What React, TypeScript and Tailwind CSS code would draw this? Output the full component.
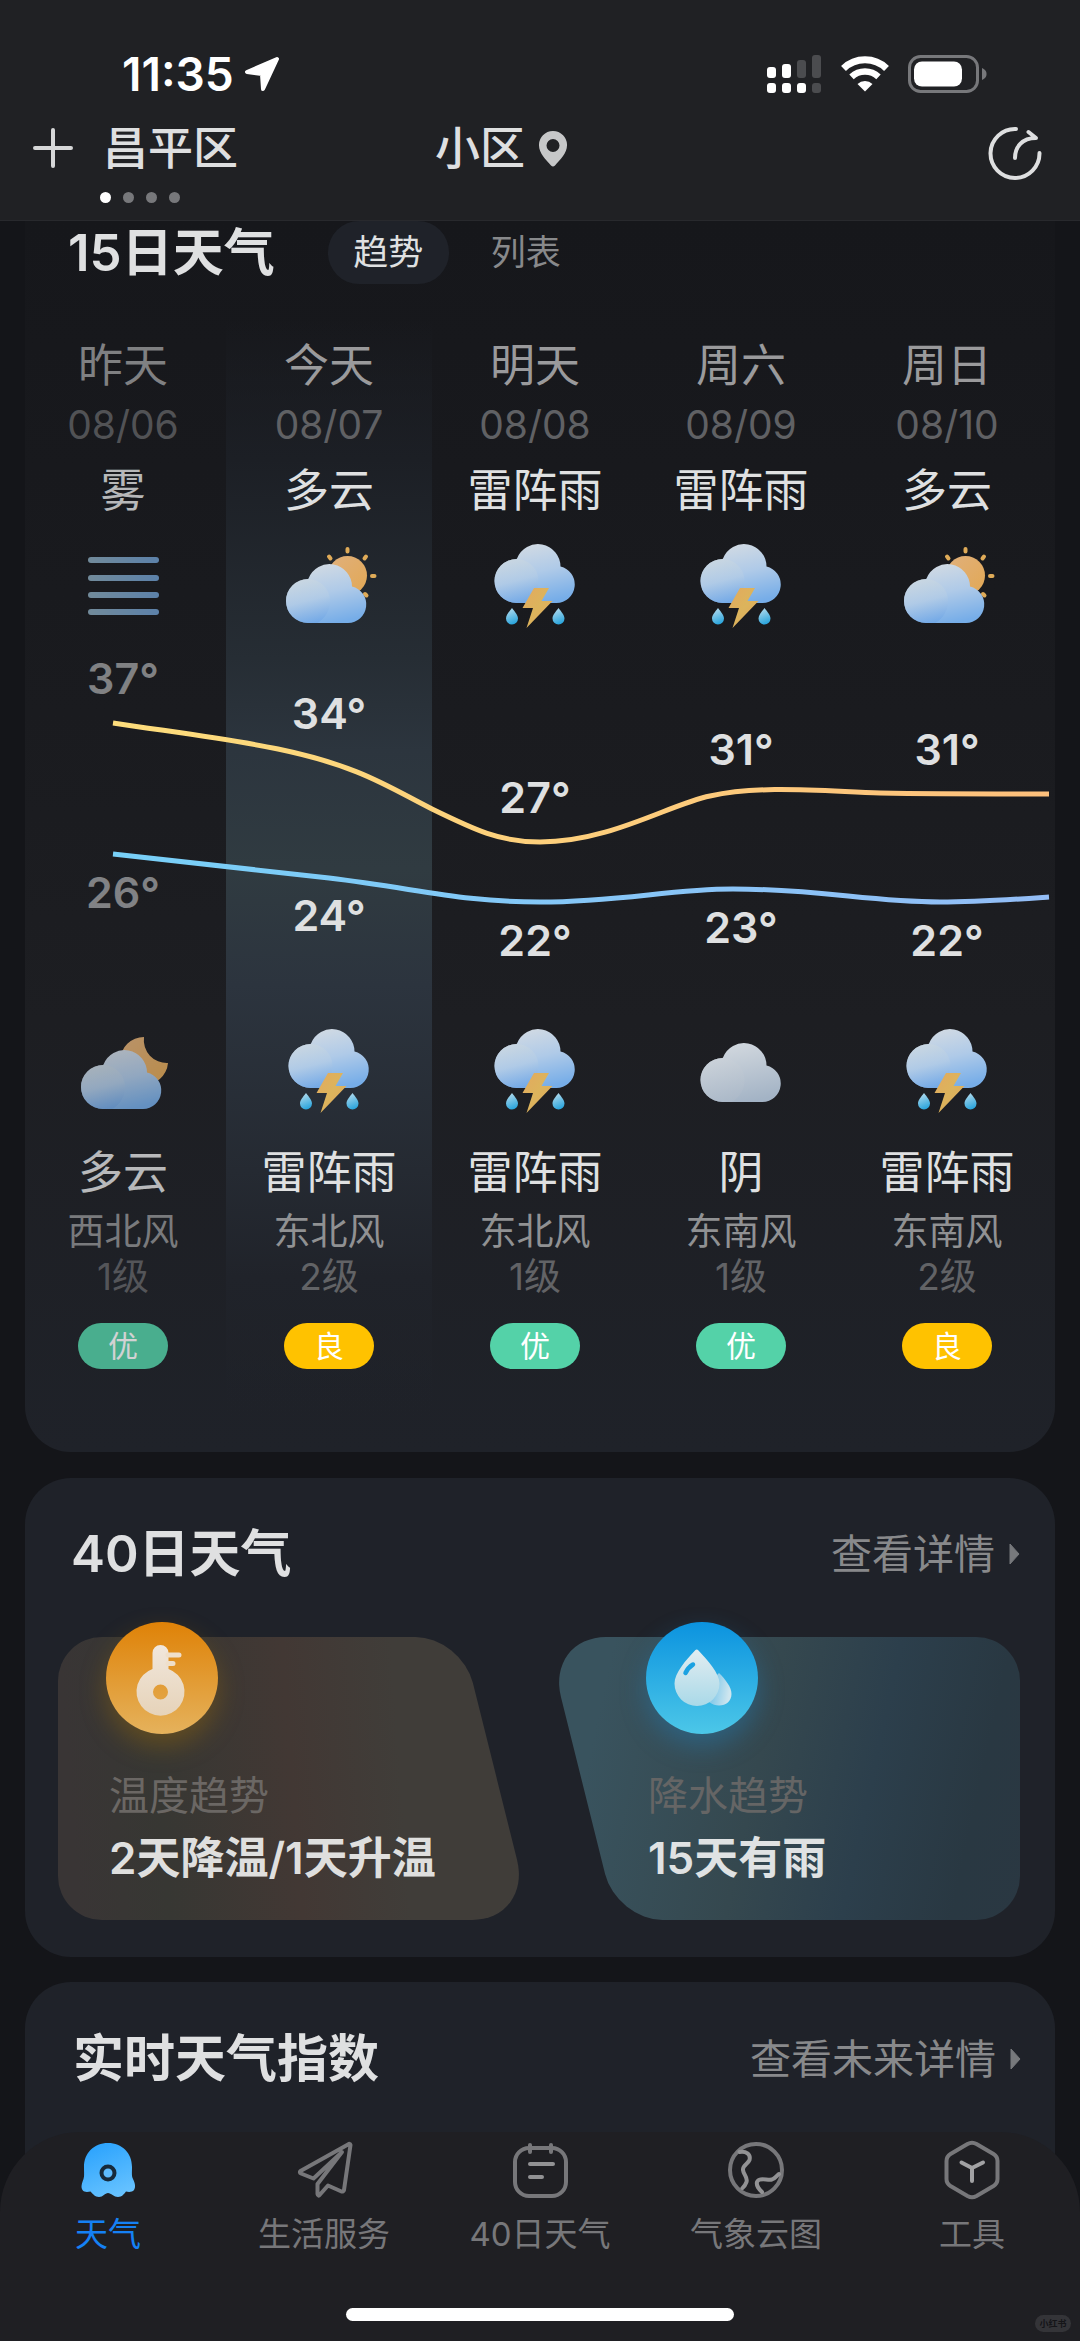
import React from "react";

type Icon = "fog" | "cloudSun" | "cloudMoon" | "thunder" | "overcast";

interface Day {
  name: string;
  date: string;
  day: string;
  dayIcon: Icon;
  high: number;
  highTop: number;
  low: number;
  lowTop: number;
  night: string;
  nightIcon: Icon;
  wind: string;
  level: string;
  air: "优" | "良";
}

const days: Day[] = [
  { name: "昨天", date: "08/06", day: "雾", dayIcon: "fog", high: 37, highTop: 20, low: 26, lowTop: 234, night: "多云", nightIcon: "cloudMoon", wind: "西北风", level: "1级", air: "优" },
  { name: "今天", date: "08/07", day: "多云", dayIcon: "cloudSun", high: 34, highTop: 55, low: 24, lowTop: 257, night: "雷阵雨", nightIcon: "thunder", wind: "东北风", level: "2级", air: "良" },
  { name: "明天", date: "08/08", day: "雷阵雨", dayIcon: "thunder", high: 27, highTop: 139, low: 22, lowTop: 282, night: "雷阵雨", nightIcon: "thunder", wind: "东北风", level: "1级", air: "优" },
  { name: "周六", date: "08/09", day: "雷阵雨", dayIcon: "thunder", high: 31, highTop: 91, low: 23, lowTop: 269, night: "阴", nightIcon: "overcast", wind: "东南风", level: "1级", air: "优" },
  { name: "周日", date: "08/10", day: "多云", dayIcon: "cloudSun", high: 31, highTop: 91, low: 22, lowTop: 282, night: "雷阵雨", nightIcon: "thunder", wind: "东南风", level: "2级", air: "良" },
];

/* Gradients shared by every weather icon */
function Gradients() {
  return (
    <svg className="absolute h-0 w-0" aria-hidden="true">
      <defs>
        <linearGradient id="cloudBack" x1="0.3" y1="0" x2="0.6" y2="1">
          <stop offset="0" stopColor="#d3dbe3" />
          <stop offset="0.5" stopColor="#afcae8" />
          <stop offset="1" stopColor="#76ade8" />
        </linearGradient>
        <linearGradient id="cloudFront" x1="0.35" y1="0" x2="0.6" y2="1">
          <stop offset="0" stopColor="#ccd8e0" />
          <stop offset="0.5" stopColor="#b3cce6" />
          <stop offset="1" stopColor="#6fa6e6" />
        </linearGradient>
        <linearGradient id="greyBack" x1="0.3" y1="0" x2="0.6" y2="1">
          <stop offset="0" stopColor="#d3d9df" />
          <stop offset="1" stopColor="#a3b3c5" />
        </linearGradient>
        <linearGradient id="greyFront" x1="0.3" y1="0" x2="0.6" y2="1">
          <stop offset="0" stopColor="#ccd3da" />
          <stop offset="1" stopColor="#adbac9" />
        </linearGradient>
        <linearGradient id="sun" x1="0" y1="0" x2="1" y2="1">
          <stop offset="0" stopColor="#e0b07c" />
          <stop offset="1" stopColor="#e2a854" />
        </linearGradient>
        <linearGradient id="bolt" x1="0" y1="0" x2="1" y2="1">
          <stop offset="0" stopColor="#e3a95f" />
          <stop offset="0.5" stopColor="#dcb45c" />
          <stop offset="1" stopColor="#e2a65c" />
        </linearGradient>
        <linearGradient id="drop" x1="0.3" y1="0" x2="0.6" y2="1">
          <stop offset="0" stopColor="#b5dcee" />
          <stop offset="1" stopColor="#26a3dc" />
        </linearGradient>
        <linearGradient id="fog" gradientUnits="userSpaceOnUse" x1="10" y1="0" x2="80" y2="0">
          <stop offset="0" stopColor="#88a7ba" />
          <stop offset="1" stopColor="#6e9ccd" />
        </linearGradient>
      </defs>
    </svg>
  );
}

function Cloud({ x = 0, y = 0, grey = false }: { x?: number; y?: number; grey?: boolean }) {
  return (
    <g transform={`translate(${x} ${y})`}>
      <path
        d="M26.500 61A22 22 0 0 1 26.500 17L27 16.500A22.500 22.500 0 0 1 70.500 24.500A18.500 18.500 0 0 1 66.500 61Z"
        fill={grey ? "url(#greyBack)" : "url(#cloudBack)"}
      />
      <path
        d="M26.500 61A22 22 0 0 1 26.500 17A22 22 0 0 1 48.500 39C48.500 48 44 56 36 61Z"
        fill={grey ? "url(#greyFront)" : "url(#cloudFront)"}
        opacity="0.7"
      />
    </g>
  );
}

function WeatherIcon({ kind, label }: { kind: Icon; label: string }) {
  return (
    <svg viewBox="0 0 90 90" className="size-[90px] overflow-visible" role="img" aria-label={label}>
      {kind === "fog" && (
        <g fill="url(#fog)">
          <rect x="10" y="15" width="71" height="6" rx="3" />
          <rect x="10" y="33" width="71" height="6" rx="3" />
          <rect x="10" y="50" width="71" height="6" rx="3" />
          <rect x="10" y="67" width="71" height="6" rx="3" />
        </g>
      )}
      {kind === "cloudSun" && (
        <>
          <circle cx="63.500" cy="33.500" r="19.500" fill="url(#sun)" />
          <g stroke="#dfab58" strokeWidth="4" strokeLinecap="round">
            <path d="M63.500 7v2.500M88 34h2.500M80.500 16.500l1.500-2M46.500 16.500l-1.500-2M81 52l1.500 1.500" />
          </g>
          <Cloud x={-2.5} y={20} />
        </>
      )}
      {kind === "cloudMoon" && (
        <>
          <path d="M66 10A24 24 0 1 0 90 36A23 23 0 0 1 66 10Z" fill="url(#sun)" />
          <Cloud x={-1.5} y={21} />
        </>
      )}
      {kind === "overcast" && <Cloud y={14} grey />}
      {kind === "thunder" && (
        <>
          <Cloud />
          <path d="M44 46H59L51.500 59H62.500L36.500 86L43 66H32.500Z" fill="url(#bolt)" />
          <path d="M22 66C25 70 28 73 28 76.500A6 6 0 0 1 16 76.500C16 73 19 70 22 66Z" fill="url(#drop)" />
          <path d="M68.500 66C71.500 70 74.500 73 74.500 76.500A6 6 0 0 1 62.500 76.500C62.500 73 65.500 70 68.500 66Z" fill="url(#drop)" />
        </>
      )}
    </svg>
  );
}

function StatusBar() {
  return (
    <div className="flex h-[100px] items-center justify-between pt-[47px] pr-[93px] pl-[122px]">
      <div className="flex items-center gap-[10px] text-[46px] leading-[52px] font-semibold text-white">
        11:35
        <svg viewBox="0 0 36 36" className="size-9" aria-hidden="true">
          <path d="M33 3L3 16L18 18L19 33Z" fill="#fff" stroke="#fff" strokeWidth="4" strokeLinejoin="round" />
        </svg>
      </div>
      <div className="flex items-center gap-[19px]">
        <svg viewBox="0 0 55 38" className="h-[38px] w-[55px]" aria-label="信号">
          <g fill="#fff">
            <rect x="0" y="12" width="9" height="11" rx="3" />
            <rect x="15" y="9" width="9" height="14" rx="3" />
            <rect x="0" y="28" width="9" height="10" rx="3" />
            <rect x="15" y="28" width="9" height="10" rx="3" />
            <rect x="30" y="28" width="9" height="10" rx="3" />
          </g>
          <g fill="#4b4c4f">
            <rect x="30" y="5" width="9" height="18" rx="3" />
            <rect x="45" y="0" width="9" height="23" rx="3" />
            <rect x="45" y="28" width="9" height="10" rx="3" />
          </g>
        </svg>
        <svg viewBox="0 0 48 36" className="h-9 w-12" aria-label="无线网络">
          <g fill="none" stroke="#fff">
            <path d="M2.500 12.500A31 31 0 0 1 45.500 12.500" strokeWidth="7" />
            <path d="M10.500 20.800A20 20 0 0 1 37.500 20.800" strokeWidth="6.500" />
          </g>
          <path d="M16.500 28A11 11 0 0 1 31.500 28L24 35.500Z" fill="#fff" />
        </svg>
        <svg viewBox="0 0 79 38" className="h-[38px] w-[79px]" aria-label="电量">
          <rect x="1.500" y="1.500" width="68" height="35" rx="11" fill="none" stroke="#77787b" strokeWidth="3" />
          <rect x="6" y="6.500" width="48" height="25" rx="8" fill="#fff" />
          <path d="M74 13C78 15 78.500 17 78.500 19S78 23 74 25Z" fill="#77787b" />
        </svg>
      </div>
    </div>
  );
}

function Header() {
  return (
    <header className="relative z-10 shrink-0 border-b border-[#28292d] bg-[#202124] text-[#dedfe0]">
      <StatusBar />
      <div className="grid h-[120px] grid-cols-[2fr_2fr_1fr] items-start pt-[23px]">
        <div className="flex gap-[27px] pl-[33px]">
          <button type="button" aria-label="添加城市" className="flex h-[50px] items-center">
            <svg viewBox="0 0 40 40" className="size-10" aria-hidden="true">
              <path d="M20 2V38M2 20H38" stroke="#d6d7d8" strokeWidth="4" strokeLinecap="round" />
            </svg>
          </button>
          <div className="flex flex-col gap-[17px]">
            <h1 className="pl-[3px] text-[45px] leading-[52px] font-medium">昌平区</h1>
            <div className="flex gap-[12px]">
              <span className="size-[11px] rounded-full bg-white" />
              <span className="size-[11px] rounded-full bg-[#77787b]" />
              <span className="size-[11px] rounded-full bg-[#77787b]" />
              <span className="size-[11px] rounded-full bg-[#77787b]" />
            </div>
          </div>
        </div>
        <div className="flex items-center gap-[14px] pl-[3px] text-[45px] leading-[52px] font-medium">
          小区
          <svg viewBox="0 0 28 36" className="h-9 w-7" aria-hidden="true">
            <path
              fillRule="evenodd"
              d="M14 0A14 14 0 0 0 0 14.500C0 22 7 29 12 34.500Q14 36.500 16 34.500C21 29 28 22 28 14.500A14 14 0 0 0 14 0ZM14 8A6.500 6.500 0 1 1 14 21A6.500 6.500 0 1 1 14 8Z"
              fill="#c6c7c8"
            />
          </svg>
        </div>
        <button type="button" aria-label="刷新" className="mr-[38px] justify-self-end pt-[3px]">
          <svg viewBox="0 0 54 54" className="size-[54px]" fill="none" stroke="#dedfe0" strokeWidth="4" strokeLinecap="round" strokeLinejoin="round" aria-hidden="true">
            <path d="M28 3A24.500 24.500 0 1 0 51.500 27" />
            <path d="M27 32C27 21 34 12 48 12L40.500 6" />
          </svg>
        </button>
      </div>
    </header>
  );
}

function TrendChart() {
  return (
    <svg
      viewBox="0 0 1030 395"
      preserveAspectRatio="none"
      className="pointer-events-none absolute top-[348px] left-0 h-[395px] w-full"
      fill="none"
      strokeWidth="5"
      aria-hidden="true"
    >
      <defs>
        <linearGradient id="highLine" gradientUnits="userSpaceOnUse" x1="93" y1="0" x2="1029" y2="0">
          <stop offset="0" stopColor="#fddd7c" />
          <stop offset="1" stopColor="#fdc07c" />
        </linearGradient>
        <linearGradient id="lowLine" gradientUnits="userSpaceOnUse" x1="93" y1="0" x2="1029" y2="0">
          <stop offset="0" stopColor="#78d0f8" />
          <stop offset="1" stopColor="#93bdf6" />
        </linearGradient>
      </defs>
      <path
        stroke="url(#highLine)"
        d="M93 91C160 101 210 107 258 117C340 134 370 156 412 177C455 198 480 210 520 210C590 210 650 172 690 164C740 153 800 159 860 161C920 162 980 162 1029 162"
      />
      <path
        stroke="url(#lowLine)"
        d="M93 222C170 231 240 238 309 246C400 257 440 270 520 270C600 270 650 257 713 257C800 257 850 270 920 270C960 270 1000 267 1029 265"
      />
    </svg>
  );
}

function DayColumn({ d, index }: { d: Day; index: number }) {
  const past = index === 0;
  const today = index === 1;
  return (
    <li
      className={
        "flex flex-col items-center pt-[56px] pb-[83px] text-center " +
        (today
          ? "bg-[linear-gradient(to_bottom,transparent_3%,#1c1f25_15%,#262d34_32%,#2c353e_40%,#303b41_50%,#2c343e_60%,#252a32_76%,#20232a_85%,transparent_97%)]"
          : "")
      }
    >
      <div className={"flex w-full flex-col items-center " + (past ? "opacity-80" : "")}>
        <p className="text-[45px] leading-[52px] text-[#9a9a9c]">{d.name}</p>
        <p className="text-[39px] leading-[66px] text-[#606164]">{d.date}</p>
        <p className="text-[45px] leading-[66px] text-[#dfe0e1]">{d.day}</p>
        <div className="pt-[18px]">
          <WeatherIcon kind={d.dayIcon} label={d.day} />
        </div>
        <div className={"relative h-[395px] w-full text-[43px] leading-[52px] font-semibold text-[#dfe0e1] " + (past ? "opacity-65" : "")}>
          <span className="absolute inset-x-0" style={{ top: d.highTop }}>{d.high}°</span>
          <span className="absolute inset-x-0" style={{ top: d.lowTop }}>{d.low}°</span>
        </div>
        <WeatherIcon kind={d.nightIcon} label={d.night} />
        <p className="pt-[30px] text-[45px] leading-[52px] text-[#dfe0e1]">{d.night}</p>
        <p className="pt-[10px] text-[37px] leading-[45px] text-[#909193]">{d.wind}</p>
        <p className="text-[37px] leading-[45px] text-[#626366]">{d.level}</p>
        <span
          className={
            "mt-[24px] h-[46px] w-[90px] rounded-full text-[30px] leading-[46px] text-white " +
            (d.air === "优" ? "bg-[#54d2a8]" : "bg-[#ffc200]")
          }
        >
          {d.air}
        </span>
      </div>
    </li>
  );
}

function MoreLink({ children }: { children: React.ReactNode }) {
  return (
    <a href="#" className="flex items-center gap-[14px] text-[41px] leading-[52px] text-[#88898b]">
      {children}
      <svg viewBox="0 0 11 22" className="h-[22px] w-[11px]" aria-hidden="true">
        <path d="M1 1L10 11L1 21Z" fill="#77797c" stroke="#77797c" strokeWidth="1" strokeLinejoin="round" />
      </svg>
    </a>
  );
}

function Forecast() {
  return (
    <section className="overflow-hidden rounded-b-[46px] bg-[linear-gradient(to_bottom,#16171b,#1a1b1f_40%,#1d1e22_65%,#1f2229)]">
      <div className="flex h-[63px] items-center pl-[43px]">
        <h2 className="text-[51px] leading-[60px] font-semibold text-[#dfe0e1]">15日天气</h2>
        <div className="ml-[53px] flex items-center text-[35px] leading-[63px]">
          <button type="button" className="w-[121px] rounded-[31px] bg-[#1f2229] text-[#dfe0e1]">趋势</button>
          <button type="button" className="ml-[42px] text-[#88898b]">列表</button>
        </div>
      </div>
      <div className="relative mr-[5px] -ml-[5px]">
        <ol className="grid grid-cols-5">
          {days.map((d, i) => (
            <DayColumn key={d.date} d={d} index={i} />
          ))}
        </ol>
        <TrendChart />
      </div>
    </section>
  );
}

function FortyDays() {
  return (
    <section className="mt-[26px] rounded-[46px] bg-[#1f2229] pt-[44px] pr-[35px] pb-[37px] pl-[33px]">
      <div className="flex h-[64px] items-center justify-between pl-[13px]">
        <h2 className="text-[51px] leading-[60px] font-semibold text-[#dfe0e1]">40日天气</h2>
        <MoreLink>查看详情</MoreLink>
      </div>
      <div className="mt-[51px] grid grid-cols-2 gap-[14px]">
        <a href="#" className="relative block pt-[133px] pb-[36px] pl-[51px]">
          <span className="absolute inset-0 overflow-hidden rounded-l-[44px]">
            <span className="absolute inset-y-0 right-0 -left-[80px] origin-bottom skew-x-[14deg] rounded-tr-[46px] rounded-br-[60px] bg-[linear-gradient(100deg,#393535_25%,#373733_40%,#423834_62%,#403d39_80%)]" />
          </span>
          <span className="absolute -top-[15px] left-[48px] size-[112px] rounded-full bg-[linear-gradient(to_bottom,#df8207,#e5b25c)] shadow-[0_12px_26px_rgba(150,105,10,0.45)]">
            <svg viewBox="0 0 112 112" className="size-full" aria-hidden="true">
              <defs>
                <linearGradient id="thermo" x1="0" y1="0" x2="0" y2="1">
                  <stop offset="0" stopColor="#f1e7dc" />
                  <stop offset="1" stopColor="#e6d3b9" />
                </linearGradient>
              </defs>
              <path
                fillRule="evenodd"
                fill="url(#thermo)"
                d="M46.500 31A8 8 0 0 1 62.500 31V47A24 24 0 1 1 46.500 47ZM54.500 62.500A7.500 7.500 0 1 0 54.500 77.500A7.500 7.500 0 1 0 54.500 62.500Z"
              />
              <path d="M62 33H73M62 41.500H67" stroke="#efdfca" strokeWidth="5" strokeLinecap="round" />
            </svg>
          </span>
          <span className="relative block text-[40px] leading-[52px] text-[#6b6764]">温度趋势</span>
          <span className="relative mt-[10px] block text-[44px] leading-[52px] font-semibold text-[#dfdfde]">2天降温/1天升温</span>
        </a>
        <a href="#" className="relative block pt-[133px] pb-[36px] pl-[102px]">
          <span className="absolute inset-0 overflow-hidden rounded-r-[44px]">
            <span className="absolute inset-y-0 -right-[80px] left-0 origin-top skew-x-[14deg] rounded-tl-[60px] rounded-bl-[46px] bg-[linear-gradient(115deg,#39535e_10%,#35484f_35%,#2c3f4c_52%,#293842_68%,#2b3742_90%)]" />
          </span>
          <span className="absolute -top-[15px] left-[100px] size-[112px] rounded-full bg-[linear-gradient(to_bottom,#0b93df,#4cc7e8)] shadow-[0_12px_26px_rgba(35,125,180,0.45)]">
            <svg viewBox="0 0 112 112" className="size-full" aria-hidden="true">
              <defs>
                <linearGradient id="water" x1="0" y1="0" x2="0" y2="1">
                  <stop offset="0" stopColor="#e3edf1" />
                  <stop offset="1" stopColor="#a9d9e8" />
                </linearGradient>
                <linearGradient id="waterSmall" x1="0" y1="0" x2="1" y2="0.2">
                  <stop offset="0.4" stopColor="#8accea" />
                  <stop offset="1" stopColor="#cfe6ef" />
                </linearGradient>
              </defs>
              <path d="M73 51C79 57 85.500 65 85.500 72C85.500 79 80 83.500 73 83.500C66 83.500 60 79 60 72C60 65 67 57 73 51Z" fill="url(#waterSmall)" />
              <path d="M49 28.500Q50.700 26.500 52.500 28.500C62 39 73.500 51 73.500 61.500A22.500 22.500 0 0 1 28.500 61.500C28.500 51 40 38 49 28.500Z" fill="url(#water)" />
              <path d="M39.500 51Q42 45.500 47 42.500" fill="none" stroke="#1ba2e2" strokeWidth="4.500" strokeLinecap="round" />
            </svg>
          </span>
          <span className="relative block text-[40px] leading-[52px] text-[#656565]">降水趋势</span>
          <span className="relative mt-[10px] block text-[44px] leading-[52px] font-semibold text-[#dfe2e3]">15天有雨</span>
        </a>
      </div>
    </section>
  );
}

function LiveIndex() {
  return (
    <section className="mt-[25px] flex-1 rounded-t-[46px] bg-[#1f2229] px-[34px] pt-[45px]">
      <div className="flex h-[64px] items-center justify-between pl-[14px]">
        <h2 className="text-[51px] leading-[60px] font-semibold text-[#dfe0e1]">实时天气指数</h2>
        <MoreLink>查看未来详情</MoreLink>
      </div>
    </section>
  );
}

const line = { fill: "none", stroke: "#77777a", strokeWidth: 4, strokeLinecap: "round", strokeLinejoin: "round" } as const;

const tabs = [
  {
    label: "天气",
    icon: (
      <>
        <defs>
          <linearGradient id="octopus" x1="0.3" y1="0" x2="0.7" y2="1">
            <stop offset="0" stopColor="#2ba3fd" />
            <stop offset="1" stopColor="#68c3ff" />
          </linearGradient>
        </defs>
        <path
          fill="url(#octopus)"
          d="M30 3C44 3 54 13 54 27C54 33 53.500 36 55 39C57 43 58 47 56 50C54 52.500 50 52 48 51.500C46 54 44 57 40 57C36 57 33 53 30 53C27 53 25 57 21 57C17 57 15 54 12.500 51.500C10 52 6 52.500 4.500 50C2.500 47 4 43 5.500 39C6.500 36 6 33 6 27C6 13 16 3 30 3Z"
        />
        <circle cx="30" cy="33" r="6.500" fill="#5ebcff" stroke="#172a3b" strokeWidth="4" />
      </>
    ),
  },
  {
    label: "生活服务",
    icon: (
      <g {...line}>
        <path d="M54 4.500L6.500 31Q5 32.500 7 33.500L19.500 38.500L48 12L23.500 44V54Q24 57 26 54.500L34 45.500L47.500 51.500Q49.500 52 50 50L56.500 5Q56 3 54 4.500Z" />
      </g>
    ),
  },
  {
    label: "40日天气",
    icon: (
      <g {...line}>
        <rect x="5" y="8" width="51" height="48" rx="14" />
        <path d="M20 5V12M41 5V12" />
        <path d="M20 24H43M20 37H32" stroke="#929294" />
      </g>
    ),
  },
  {
    label: "气象云图",
    icon: (
      <g {...line}>
        <circle cx="30" cy="30" r="26" />
        <path stroke="#929294" d="M13.500 12C20 11 25 14 23.500 20C22 24 16.500 25 17 30C17.500 35 22 37 20.500 42Q19 46 16.500 48M53 34C50 36 50 38 46 39.500C41 40.500 33 37 31 42C30 46 33 49 36 52" />
      </g>
    ),
  },
  {
    label: "工具",
    icon: (
      <g {...line}>
        <path d="M25.500 4Q30 1.500 34.500 4L51.500 14Q55.500 16.500 55.500 21V39Q55.500 43.500 51.500 46L34.500 56Q30 58.500 25.500 56L8.500 46Q4.500 43.500 4.500 39V21Q4.500 16.500 8.500 14Z" />
        <path d="M19.500 22.500L30 28L41 22.500M30 28V41" stroke="#a2a2a4" />
      </g>
    ),
  },
];

function TabBar() {
  return (
    <nav className="relative z-10 -mt-[80px] shrink-0 rounded-t-[80px] bg-[#1f1f23]">
      <ul className="grid grid-cols-5 pt-[8px]">
        {tabs.map((t, i) => (
          <li key={t.label}>
            <a
              href="#"
              aria-current={i === 0 ? "page" : undefined}
              className={"flex flex-col items-center gap-[9px] text-[33px] leading-[50px] " + (i === 0 ? "text-[#1581f5]" : "text-[#77777a]")}
            >
              <svg viewBox="0 0 60 60" className="size-[60px]" aria-hidden="true">
                {t.icon}
              </svg>
              {t.label}
            </a>
          </li>
        ))}
      </ul>
      <div className="flex justify-center pt-[49px] pb-[20px]">
        <span className="h-[13px] w-[36%] rounded-full bg-white" />
      </div>
      <span className="absolute right-[9px] bottom-[9px] h-[17px] w-[36px] rounded-full bg-[#343438] text-center text-[9px] leading-[17px] font-bold text-[#151518]">
        小红书
      </span>
    </nav>
  );
}

export default function App() {
  return (
    <div className="flex h-screen flex-col overflow-hidden bg-[#141519] font-['Inter','Noto_Sans_CJK_SC',sans-serif]">
      <Gradients />
      <Header />
      <main className="flex min-h-0 flex-1 flex-col overflow-hidden px-[25px]">
        <Forecast />
        <FortyDays />
        <LiveIndex />
      </main>
      <TabBar />
    </div>
  );
}
